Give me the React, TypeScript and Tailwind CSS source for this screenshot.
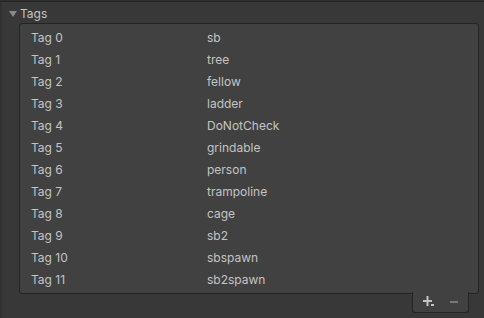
import React from "react";

const tags = [
  "sb",
  "tree",
  "fellow",
  "ladder",
  "DoNotCheck",
  "grindable",
  "person",
  "trampoline",
  "cage",
  "sb2",
  "sbspawn",
  "sb2spawn",
];

export default function App() {
  return (
    <div
      className="w-[484px] h-[318px] bg-[#383838] text-[#c4c4c4] text-[12px] overflow-hidden flex flex-col"
      style={{ fontFamily: "Inter, 'Noto Sans', sans-serif" }}
    >
      <div className="h-px bg-[#303030]" />
      <div className="h-px bg-[#232323]" />
      <div className="flex flex-1">
        <div className="w-[2px] bg-[#313131]" />
        <div className="flex-1 flex flex-col">
          <div className="h-[21px] flex items-center pl-[6px] pt-[2px]">
            <svg width="10" height="10" viewBox="0 0 10 10" className="mr-[2px]">
              <polygon points="1,2 9,2 5,8" fill="#8a8a8a" />
            </svg>
            <span className="leading-none">Tags</span>
          </div>
          <div className="ml-[17px] w-[460px] flex flex-col">
            <div className="h-[271px] border border-[#242424] rounded-[3px] bg-[#414141] pt-[2px] flex flex-col">
              {tags.map((t, i) => (
                <div key={i} className="h-[22px] flex items-center leading-none pt-[1px]">
                  <span className="w-[187px] pl-[11px] shrink-0">Tag {i}</span>
                  <span>{t}</span>
                </div>
              ))}
            </div>
            <div className="flex justify-end pr-[10px]">
              <div className="-mt-[2px] w-[57px] h-[21px] bg-[#414141] border border-t-0 border-[#242424] rounded-b-[3px] flex items-center">
                <svg width="14" height="12" viewBox="0 0 14 12" className="ml-[10px]">
                  <rect x="0" y="4" width="9" height="2" fill="#c4c4c4" />
                  <rect x="3.5" y="0" width="2" height="10" fill="#c4c4c4" />
                  <rect x="8" y="8" width="3" height="2" fill="#c4c4c4" />
                </svg>
                <svg width="10" height="10" viewBox="0 0 10 10" className="ml-[12px]">
                  <rect x="1" y="4" width="8" height="2" fill="#7a7a7a" />
                </svg>
              </div>
            </div>
          </div>
        </div>
      </div>
    </div>
  );
}
